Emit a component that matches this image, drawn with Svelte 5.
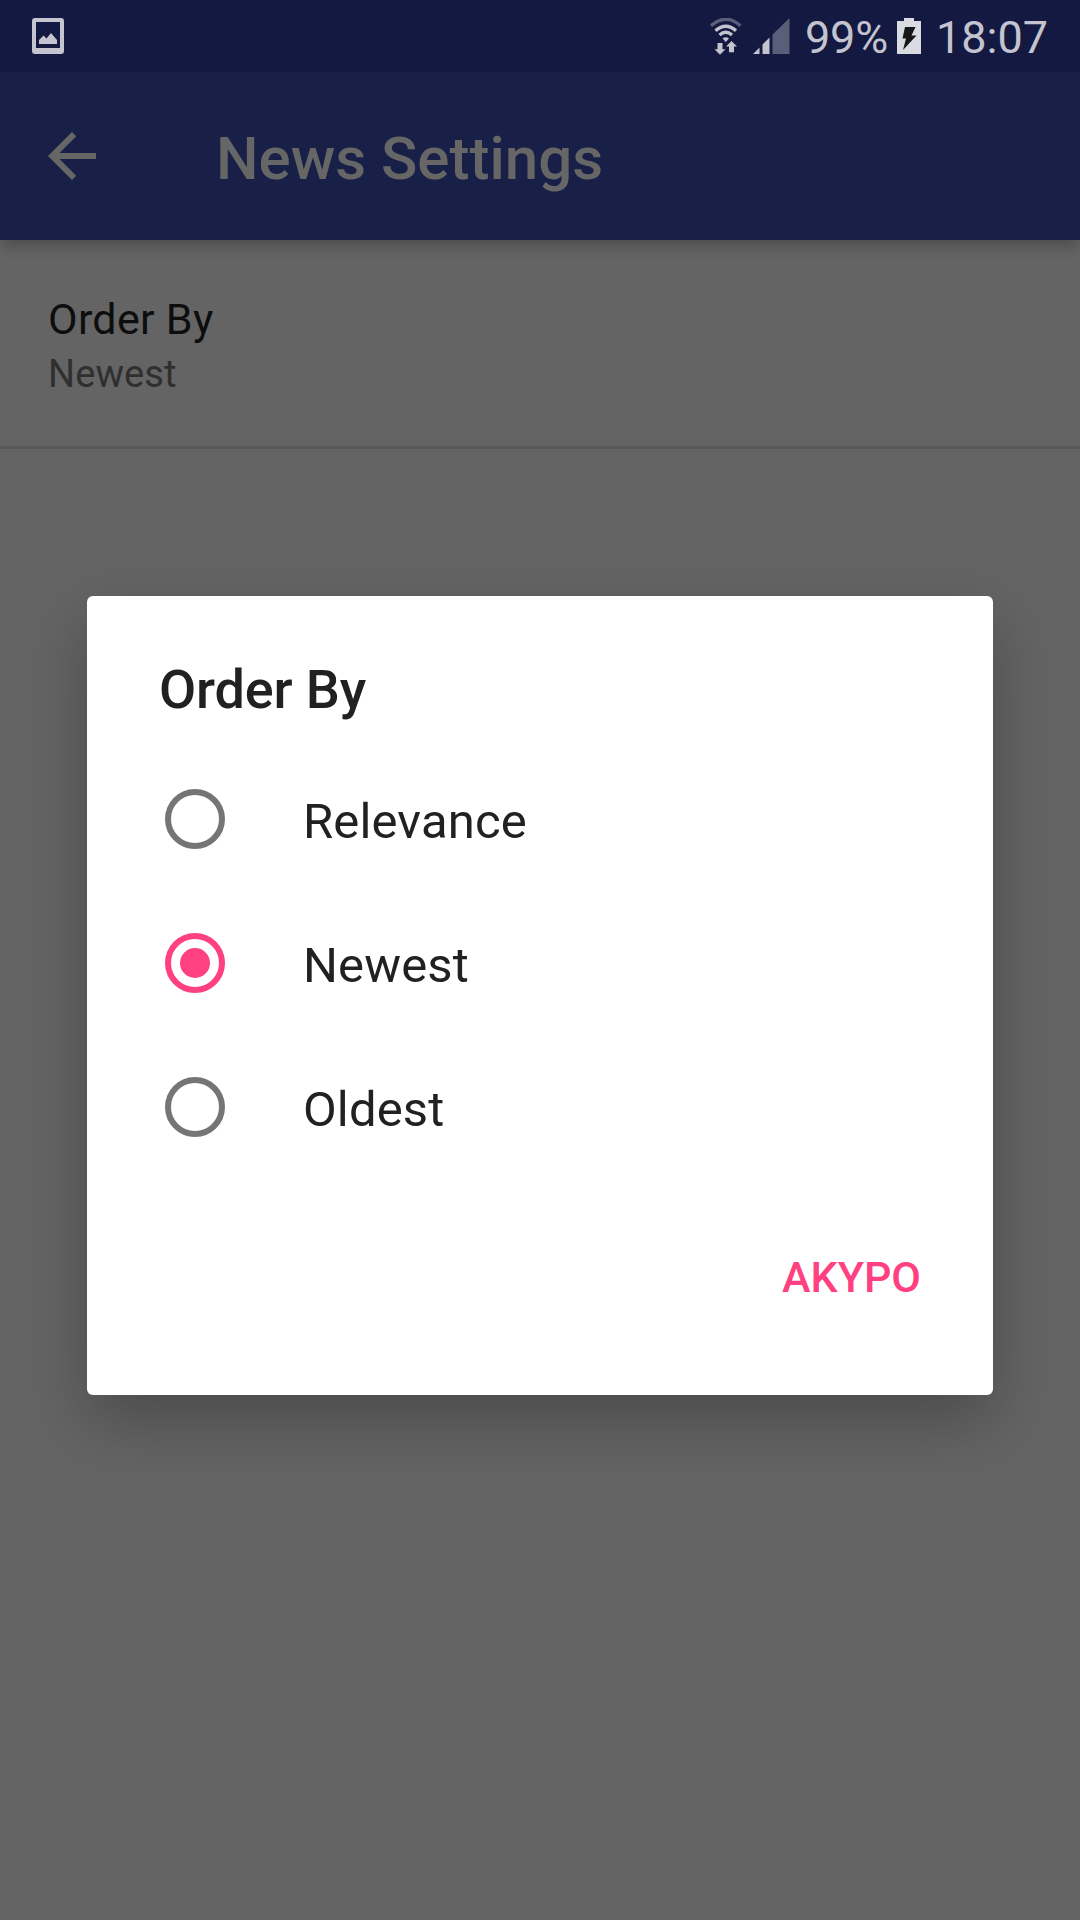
<script>
  const options = ['Relevance', 'Newest', 'Oldest'];
  let selected = $state('Newest');
</script>

<div class="screen">
  <header class="status">
    <svg class="picture" width="32" height="36" viewBox="0 0 32 36">
      <path fill-rule="evenodd" d="M3 0H29Q32 0 32 3V33Q32 36 29 36H3Q0 36 0 33V3Q0 0 3 0ZM4 4V30H28V4Z" />
      <path d="M7 26V22L11.5 17.5L14.5 20.5L19 15L25 22V26Z" />
    </svg>
    <div class="indicators">
      <svg class="wifi" width="32" height="38" viewBox="0 0 32 38">
        <g fill="none" stroke="#c3c4cf" stroke-width="3.400">
          <path class="faint" d="M1 7.700Q16 -5.300 30.500 7.700" />
          <path d="M5.500 12.700Q15.800 3.700 26 12.700" />
          <path d="M9.500 17Q15.800 11.500 22 17" />
        </g>
        <path d="M12.500 20.500Q15.800 18 19 20.500L15.800 24Z" />
        <path d="M7.500 25H12.500V31.200H15.500L10 36.800L4.500 31.200H7.500Z" />
        <path d="M19 34.200H24V28.500H27L21.500 23L16 28.500H19Z" />
      </svg>
      <svg class="signal" width="37" height="36" viewBox="0 0 37 36">
        <path d="M0 36L6.500 29.500V36ZM9.500 36V26.500L16.500 19.500V36Z" />
        <path class="bar" d="M19.500 36V16.500L36.500 0V36Z" />
      </svg>
      <span class="percent">99%</span>
      <svg class="battery" width="24" height="36" viewBox="0 0 24 36">
        <path class="cell" d="M7 0H17V3H24V36H0V3H7Z" />
        <path class="bolt" d="M8 9H18.500L14.500 17.500H19.500L6 32L9 20.500H5.500Z" />
      </svg>
      <span class="clock">18:07</span>
    </div>
  </header>

  <div class="toolbar">
    <svg width="72" height="72" viewBox="0 0 24 24">
      <path d="M20 11H7.830l5.590-5.590L12 4l-8 8 8 8 1.410-1.410L7.830 13H20v-2z" />
    </svg>
    <h1>News Settings</h1>
  </div>

  <section class="preference">
    <div class="name">Order By</div>
    <div class="value">Newest</div>
  </section>

  <main class="overlay">
    <div class="dialog" role="dialog" aria-label="Order By">
      <h2>Order By</h2>
      <div class="options" role="radiogroup">
        {#each options as option}
          <button class="option" role="radio" aria-checked={selected === option} onclick={() => (selected = option)}>
            <span class="radio" class:checked={selected === option}></span>
            <span class="label">{option}</span>
          </button>
        {/each}
      </div>
      <div class="actions">
        <button class="cancel">ΑΚΥΡΟ</button>
      </div>
    </div>
  </main>
</div>

<style>
  :global(body) {
    background: #646464;
  }
  .screen {
    display: flex;
    flex-direction: column;
    width: 1080px;
    height: 1920px;
    overflow: hidden;
    background: #646464;
    font-family: Roboto, sans-serif;
  }
  svg {
    display: block;
    flex: none;
  }
  h1,
  h2 {
    margin: 0;
    font-weight: 500;
  }
  button {
    margin: 0;
    padding: 0;
    border: 0;
    background: none;
    font: inherit;
  }
  .status {
    display: flex;
    justify-content: space-between;
    height: 72px;
    flex: none;
    box-sizing: border-box;
    padding: 18px 32px 0;
    background: #131940;
    color: #c3c4cf;
    fill: #c3c4cf;
  }
  .indicators {
    display: flex;
    width: 338px;
    font-size: 45px;
    line-height: 39px;
  }
  .faint {
    stroke: #5a5e79;
  }
  .bar {
    fill: #5a5e79;
  }
  .signal {
    margin-left: 11px;
  }
  .percent {
    width: 84px;
    margin-left: 15px;
    white-space: nowrap;
    letter-spacing: -0.2px;
  }
  .battery {
    margin-left: 8px;
  }
  .cell {
    fill: #dadbe1;
  }
  .bolt {
    fill: #171717;
  }
  .clock {
    margin-left: 15px;
    white-space: nowrap;
  }
  .toolbar {
    display: flex;
    align-items: center;
    height: 168px;
    flex: none;
    box-sizing: border-box;
    padding-left: 36px;
    gap: 108px;
    background: #192048;
    box-shadow: 0 8px 14px -2px rgba(0, 0, 0, 0.24);
    color: #666;
    fill: #666;
  }
  h1 {
    padding-top: 6px;
    font-size: 60px;
    line-height: 72px;
  }
  .preference {
    flex: none;
    height: 209px;
    box-sizing: border-box;
    padding: 54px 48px 0;
    border-bottom: 3px solid #585858;
  }
  .name {
    font-size: 43px;
    line-height: 50px;
    letter-spacing: 0.3px;
    color: #0d0d0d;
  }
  .value {
    margin-top: 7px;
    font-size: 38px;
    line-height: 46px;
    letter-spacing: 0.1px;
    color: #2f2f2f;
  }
  .overlay {
    padding: 147px 87px 0;
  }
  .dialog {
    height: 799px;
    box-sizing: border-box;
    padding: 62px 72px 0;
    border-radius: 6px;
    background: #fff;
    color: #212121;
    box-shadow: 0 26px 64px rgba(0, 0, 0, 0.25);
  }
  h2 {
    height: 89px;
    font-size: 54px;
    line-height: 64px;
    letter-spacing: -0.15px;
  }
  .option {
    display: flex;
    align-items: center;
    width: 100%;
    height: 144px;
    padding-left: 6px;
    gap: 78px;
    color: #212121;
    font-size: 49px;
  }
  .radio {
    display: grid;
    place-items: center;
    width: 60px;
    height: 60px;
    box-sizing: border-box;
    border: 6px solid #757575;
    border-radius: 50%;
  }
  .checked {
    border-color: #ff4081;
  }
  .checked::before {
    content: '';
    width: 30px;
    height: 30px;
    border-radius: 50%;
    background: #ff4081;
  }
  .label {
    padding-top: 5px;
    line-height: 58px;
    letter-spacing: 0.15px;
  }
  .actions {
    display: flex;
    justify-content: flex-end;
    padding-top: 73px;
  }
  .cancel {
    color: #ff4081;
    font-size: 43px;
    font-weight: 500;
    line-height: 50px;
  }
</style>
